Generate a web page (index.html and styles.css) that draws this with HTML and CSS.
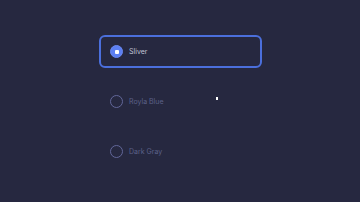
FILE: index.html
```html
<!DOCTYPE html>
<html>
<head>
<meta charset="utf-8">
<link rel="stylesheet" href="styles.css">
</head>
<body>
<div class="list">
  <div class="option selected">
    <span class="radio"><span class="dot"></span></span>
    <span class="label">Sliver</span>
  </div>
  <div class="option">
    <span class="radio"></span>
    <span class="label">Royla Blue</span>
  </div>
  <div class="option">
    <span class="radio"></span>
    <span class="label">Dark Gray</span>
  </div>
</div>
<span class="cursor"></span>
</body>
</html>
```

FILE: styles.css
```css
html, body {
  margin: 0;
  padding: 0;
  background: #262840;
  width: 360px;
  height: 202px;
  overflow: hidden;
  font-family: "Inter", "Liberation Sans", sans-serif;
}
.list {
  display: flex;
  flex-direction: column;
  gap: 17px;
  width: 163px;
  margin-left: 99px;
  padding-top: 35px;
}
.option {
  box-sizing: border-box;
  height: 33px;
  display: flex;
  align-items: center;
  gap: 6px;
  padding-left: 9px;
  border: 2px solid transparent;
  border-radius: 6px;
}
.option.selected {
  border-color: #4b6fdc;
}
.radio {
  box-sizing: border-box;
  width: 13px;
  height: 13px;
  border-radius: 50%;
  border: 1.5px solid #62679a;
  display: flex;
  align-items: center;
  justify-content: center;
}
.selected .radio {
  background: #5c7ff2;
  border-color: #6a88f0;
}
.dot {
  width: 4px;
  height: 4px;
  border-radius: 1px;
  background: #ffffff;
}
.label {
  font-size: 7px;
  color: #5c6189;
}
.selected .label {
  color: #c3c6d8;
}
.cursor {
  position: absolute;
  left: 216px;
  top: 97px;
  width: 2px;
  height: 3px;
  background: #ffffff;
}
```
